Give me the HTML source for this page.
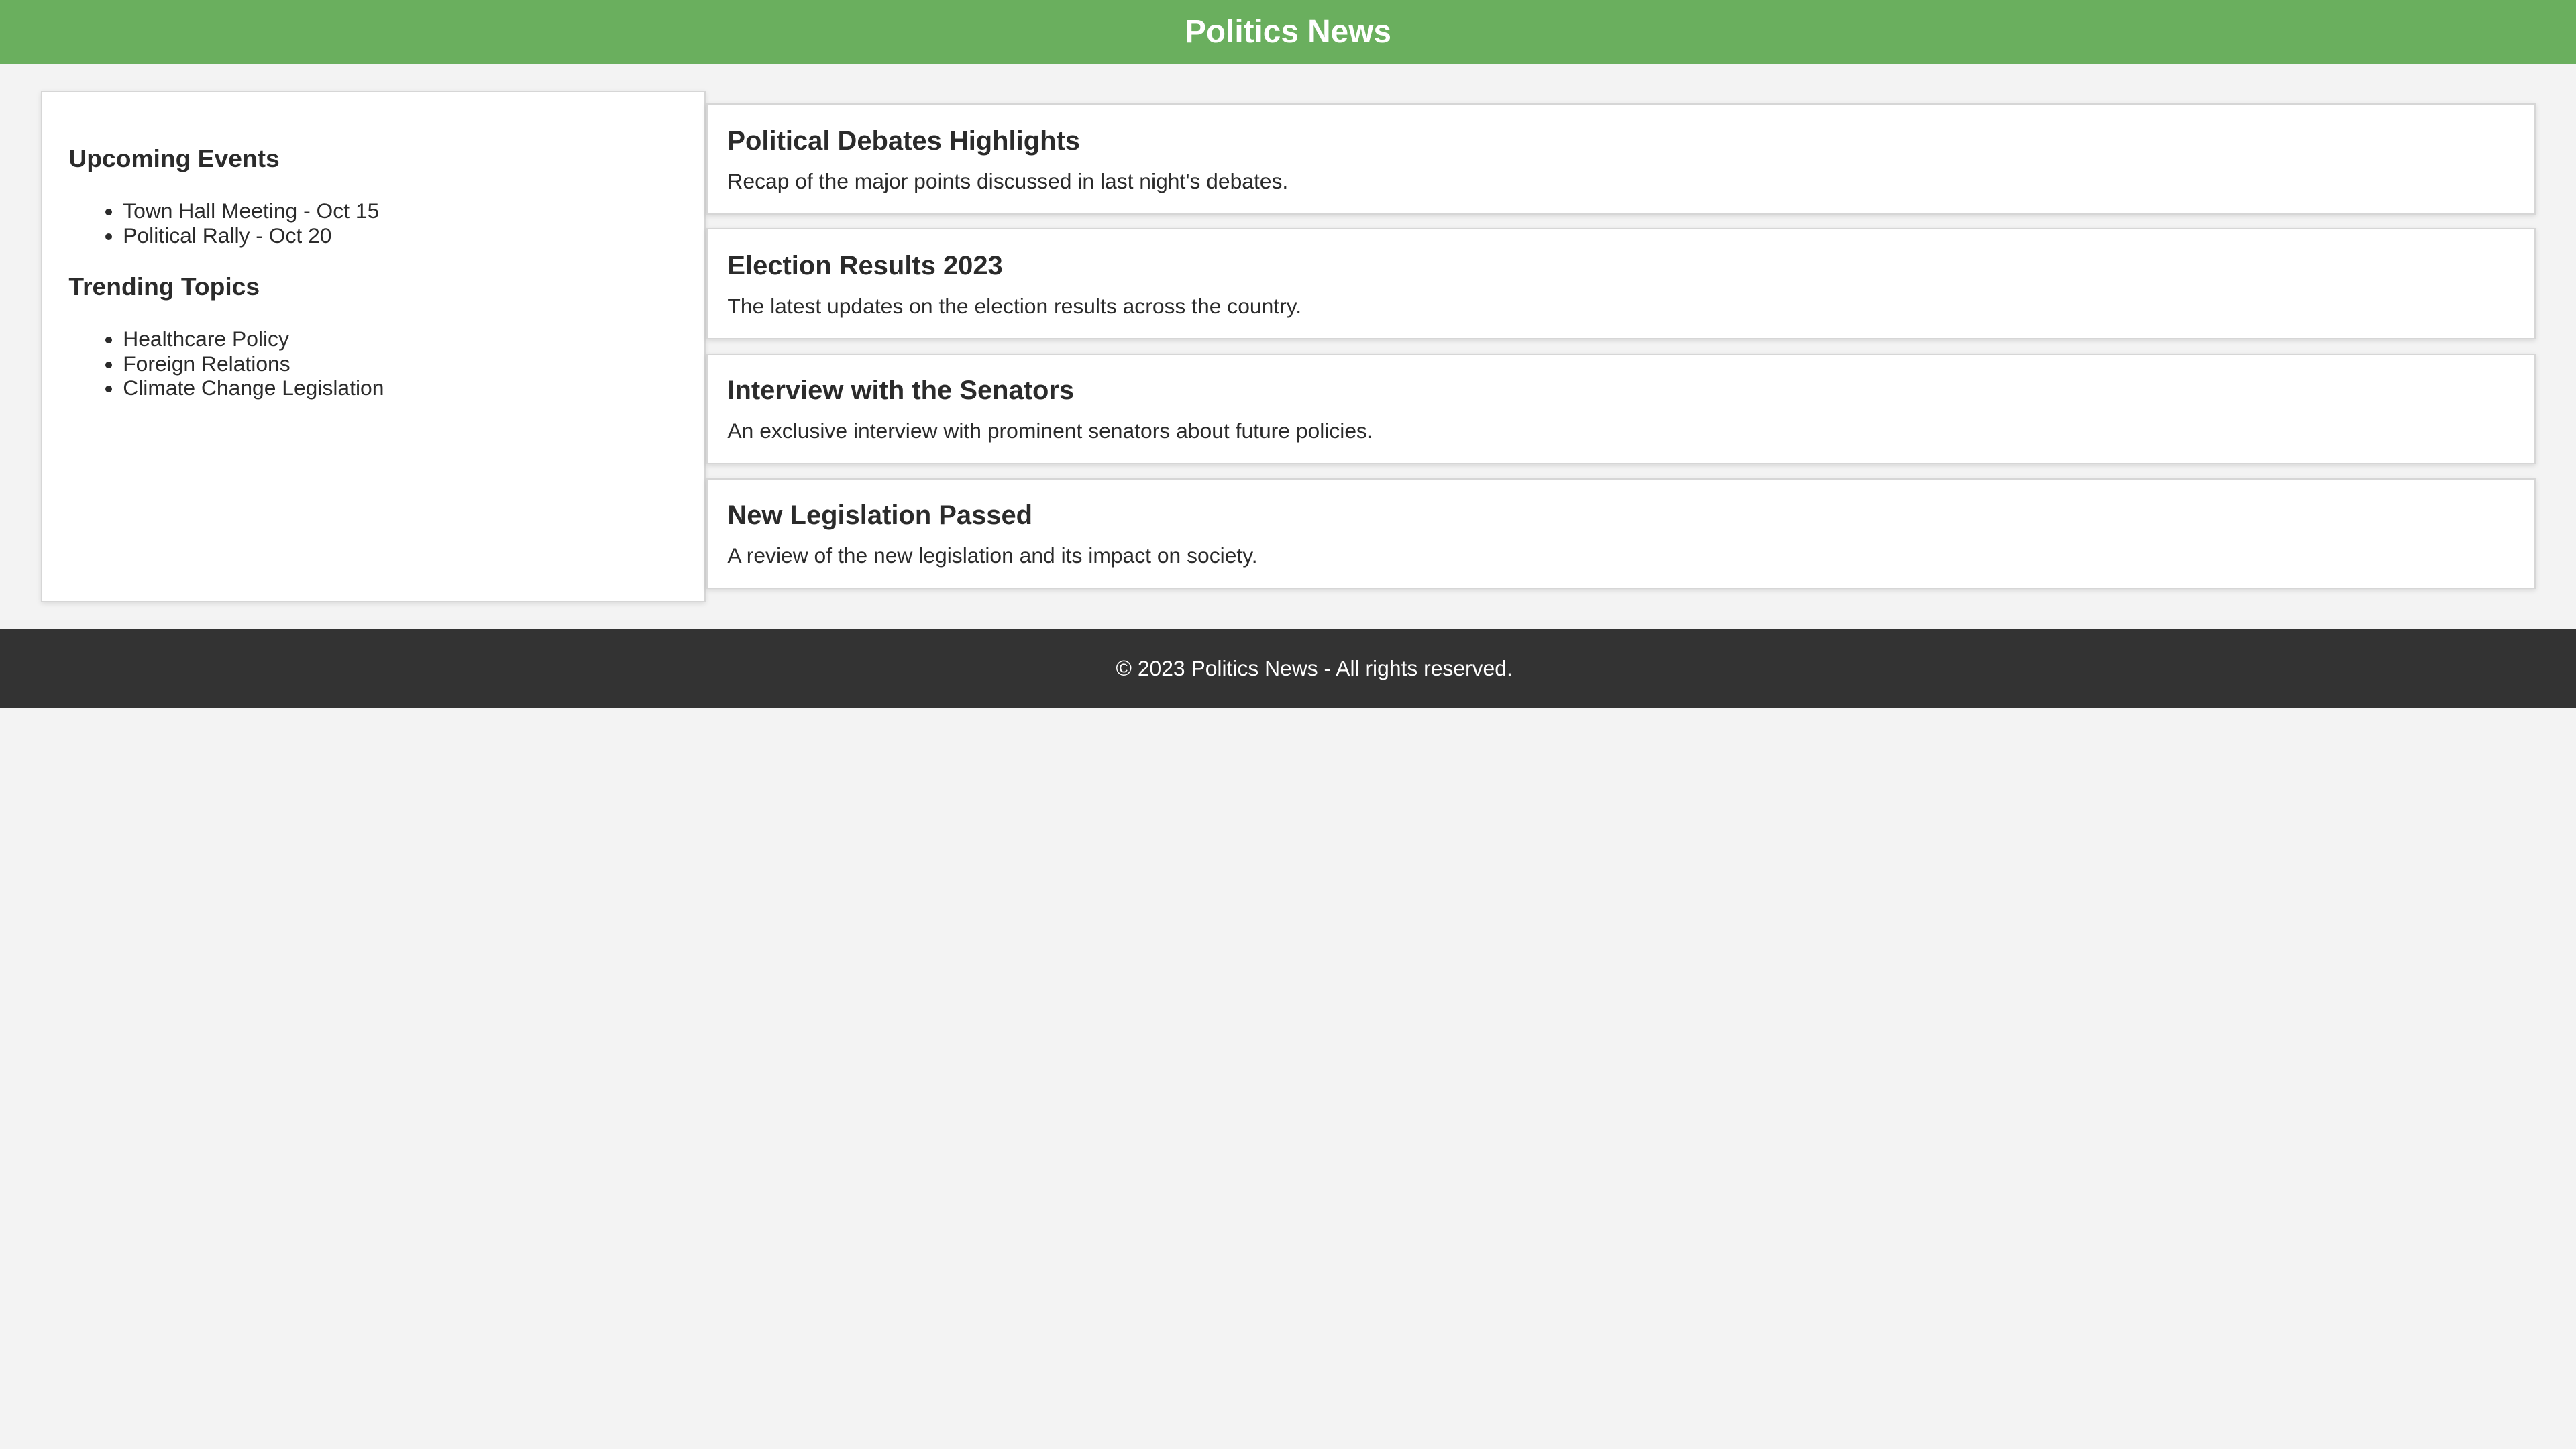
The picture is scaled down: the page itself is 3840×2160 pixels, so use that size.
<!DOCTYPE html>
<html><head><meta charset="utf-8"><style>
html,body{margin:0;padding:0;background:#f3f3f3;}
body{width:1568px;height:882px;zoom:2.44898;font-family:"Liberation Sans",Arial,sans-serif;color:#2b2b2b;position:relative;overflow:hidden;}
.hdr{position:absolute;left:0;top:0;width:1568px;height:39px;background:#6aaf5e;color:#fff;font-weight:bold;font-size:19.5px;text-align:center;line-height:39px;}
.side{position:absolute;left:25px;top:55px;width:403px;height:310px;background:#fff;border:1px solid #d6d6d6;box-shadow:0 1px 3px rgba(0,0,0,.1);}
.side h3{position:absolute;left:16px;margin:0;font-size:15.2px;font-weight:bold;}
.side ul{position:absolute;left:33px;margin:0;padding:0 0 0 16px;font-size:13px;line-height:15px;}
.card{position:absolute;left:430px;width:1112px;height:66px;background:#fff;border:1px solid #d6d6d6;box-shadow:0 1px 3px rgba(0,0,0,.12);}
.card h2{position:absolute;left:12px;top:13px;margin:0;font-size:16.3px;font-weight:bold;}
.card p{position:absolute;left:12px;top:39px;margin:0;font-size:13px;}
.ftr{position:absolute;left:0;top:383px;width:1568px;height:48px;background:#333;color:#fff;font-size:13px;line-height:48px;text-align:center;}
</style></head><body>
<div class="hdr">Politics News</div>
<div class="side">
<h3 style="top:32px">Upcoming Events</h3>
<ul style="top:65px"><li>Town Hall Meeting - Oct 15</li><li>Political Rally - Oct 20</li></ul>
<h3 style="top:110px">Trending Topics</h3>
<ul style="top:143px"><li>Healthcare Policy</li><li>Foreign Relations</li><li>Climate Change Legislation</li></ul>
</div>
<div class="card" style="top:63px"><h2>Political Debates Highlights</h2><p>Recap of the major points discussed in last night's debates.</p></div>
<div class="card" style="top:139px"><h2>Election Results 2023</h2><p>The latest updates on the election results across the country.</p></div>
<div class="card" style="top:215px"><h2>Interview with the Senators</h2><p>An exclusive interview with prominent senators about future policies.</p></div>
<div class="card" style="top:291px"><h2>New Legislation Passed</h2><p>A review of the new legislation and its impact on society.</p></div>
<div class="ftr"><span style="padding-left:32px">© 2023 Politics News - All rights reserved.</span></div>
</body></html>
